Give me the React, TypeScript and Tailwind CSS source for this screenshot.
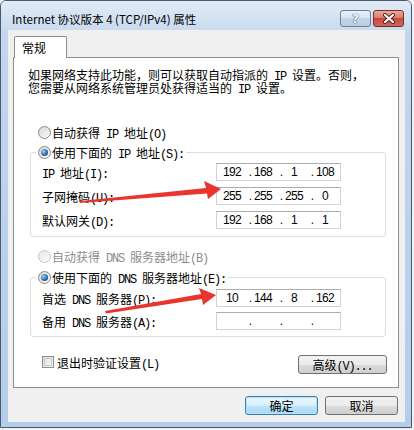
import React from "react";

function T({ s }: { s: string }) {
  const parts = s.split(/([\x20-\x7e]+)/).filter((p) => p.length > 0);
  return (
    <span className="flex items-baseline h-[13px] whitespace-nowrap">
      {parts.map((p, i) =>
        /^[\x20-\x7e]+$/.test(p) ? (
          <span key={i} className="font-['Liberation_Mono',monospace] tracking-[-1.2px] whitespace-pre leading-[13px]">
            {p}
          </span>
        ) : (
          <span key={i} className="leading-[13px]">{p}</span>
        )
      )}
    </span>
  );
}

function Radio({ checked, disabled }: { checked?: boolean; disabled?: boolean }) {
  return (
    <div
      className={
        "w-[13px] h-[13px] rounded-full border flex items-center justify-center shrink-0 " +
        (disabled
          ? "border-[#c4c4c4] bg-linear-to-br from-[#e8e8e8] to-[#fafafa]"
          : "border-[#8a8a8a] bg-linear-to-br from-[#d6d6d6] to-[#fbfbfb]")
      }
    >
      {checked && (
        <div className="w-[7px] h-[7px] rounded-full bg-[radial-gradient(circle_at_35%_35%,#9fd0f5,#2a6fb0_55%,#123e6b)]" />
      )}
    </div>
  );
}

function IPBox({ v }: { v: string[] }) {
  return (
    <div className="w-[125px] h-[18px] bg-white border border-[#cfd2d8] border-t-[#abadb3] flex items-center pl-[4px] font-['Liberation_Sans',sans-serif] text-[12px] leading-[14px] text-black">
      <span className="w-[22px] text-center tracking-[-0.6px]">{v[0]}</span>
      <span className="w-[9px] text-right">.</span>
      <span className="w-[22px] text-center tracking-[-0.6px]">{v[1]}</span>
      <span className="w-[9px] text-right">.</span>
      <span className="w-[22px] text-center tracking-[-0.6px]">{v[2]}</span>
      <span className="w-[9px] text-right">.</span>
      <span className="w-[22px] text-center tracking-[-0.6px]">{v[3]}</span>
    </div>
  );
}

function Row({ label, v }: { label: string; v: string[] }) {
  return (
    <div className="flex items-center h-[18px] pl-[11px]">
      <div className="w-[174px]">
        <T s={label} />
      </div>
      <IPBox v={v} />
    </div>
  );
}

const btn =
  "h-[19px] rounded-[3px] border border-[#707070] bg-[linear-gradient(#f2f2f2,#ebebeb_50%,#dddddd_50%,#cfcfcf)] flex items-center justify-center text-[12px] leading-[13px] text-black";

export default function App() {
  return (
    <div className="w-[414px] h-[430px] bg-[#eef1f5] relative overflow-hidden font-['Noto_Sans_CJK_SC',sans-serif] text-[12px] leading-[13px] text-black">
      <div className="w-[412px] h-[428px] border border-[#4a5a6e] rounded-t-[6px] bg-linear-to-b from-[#c4d8ee] to-[#b4cde9] flex flex-col overflow-hidden">
        {/* Title bar */}
        <div className="h-[29px] shrink-0 flex items-start bg-linear-to-b from-[#e1ebf6] to-[#c9dbef]">
          <div className="ml-[11px] mt-[10px] text-[11.5px] leading-[16px] whitespace-nowrap text-black">
            Internet 协议版本 4 (TCP/IPv4) 属性
          </div>
          <div className="ml-auto mt-[9px] mr-[7px] flex gap-[2px]">
            <div className="w-[31px] h-[17px] rounded-[3px] border border-[#6e7f96] bg-[linear-gradient(#eaf1f9,#d6e3f2_50%,#c3d5ea_50%,#b8cce4)] flex items-center justify-center">
              <span className="font-['DejaVu_Sans',sans-serif] font-bold text-[12px] leading-[12px] text-[#f6f9fc] [text-shadow:0_0_1px_#34465e,0_0_1px_#34465e]">
                ?
              </span>
            </div>
            <div className="w-[31px] h-[17px] rounded-[3px] border border-[#7b2c25] bg-[linear-gradient(#eaaa9c,#d77868_50%,#c7483b_50%,#d0685a)] flex items-center justify-center">
              <svg width="14" height="11" viewBox="0 0 14 11">
                <path d="M3 2 L11 9 M11 2 L3 9" stroke="#5a1a14" strokeWidth="4" strokeLinecap="round" />
                <path d="M3 2 L11 9 M11 2 L3 9" stroke="#ffffff" strokeWidth="2.2" strokeLinecap="round" />
              </svg>
            </div>
          </div>
        </div>

        {/* Client */}
        <div className="ml-[7px] w-[397px] h-[392px] bg-[#f0f0f0] flex flex-col pt-[6px]">
          <div className="ml-[6px] w-[53px] h-[22px] -mb-[1px] relative z-10 bg-white border border-b-0 border-[#898c95] rounded-t-[2px] pl-[7px] pt-[4px] leading-[13px]">
            常规
          </div>
          <div className="ml-[5px] w-[386px] h-[331px] bg-white border border-[#898c95] flex flex-col">
            <div className="mt-[10px] pl-[14px] flex flex-col">
              <T s="如果网络支持此功能，则可以获取自动指派的 IP 设置。否则，" />
              <T s="您需要从网络系统管理员处获得适当的 IP 设置。" />
            </div>

            <div className="mt-[32px] ml-[24px] flex items-center gap-[1px] h-[13px]">
              <Radio />
              <T s="自动获得 IP 地址(O)" />
            </div>

            <div className="mt-[13px] ml-[16px] w-[356px] border border-[#d5dfe5] rounded-[3px] flex flex-col pb-[7px]">
              <div className="-mt-[7px] ml-[5px] px-[2px] bg-white w-fit flex items-center gap-[1px] h-[13px]">
                <Radio checked />
                <T s="使用下面的 IP 地址(S):" />
              </div>
              <div className="mt-[4px] flex flex-col gap-[6px]">
                <Row label="IP 地址(I):" v={["192", "168", "1", "108"]} />
                <Row label="子网掩码(U):" v={["255", "255", "255", "0"]} />
                <Row label="默认网关(D):" v={["192", "168", "1", "1"]} />
              </div>
            </div>

            <div className="mt-[13px] ml-[24px] flex items-center gap-[1px] h-[13px] text-[#8d8d8d]">
              <Radio disabled />
              <T s="自动获得 DNS 服务器地址(B)" />
            </div>

            <div className="mt-[14px] ml-[16px] w-[356px] border border-[#d5dfe5] rounded-[3px] flex flex-col pb-[6px]">
              <div className="-mt-[7px] ml-[5px] px-[2px] bg-white w-fit flex items-center gap-[1px] h-[13px]">
                <Radio checked />
                <T s="使用下面的 DNS 服务器地址(E):" />
              </div>
              <div className="mt-[5px] flex flex-col gap-[5px]">
                <Row label="首选 DNS 服务器(P):" v={["10", "144", "8", "162"]} />
                <Row label="备用 DNS 服务器(A):" v={["", "", "", ""]} />
              </div>
            </div>

            <div className="mt-[18px] flex items-start">
              <div className="ml-[28px] mt-[1px] flex items-center gap-[3px] h-[12px]">
                <div className="w-[12px] h-[12px] border border-[#8f8f8f] bg-linear-to-br from-[#dcdcdc] to-[#f7f7f7] flex items-center justify-center">
                  <div className="w-[8px] h-[8px] border border-[#c9c9c9] bg-linear-to-br from-[#e6e6e6] to-[#f4f4f4]" />
                </div>
                <T s="退出时验证设置(L)" />
              </div>
              <div className={btn + " ml-auto mr-[11px] w-[89px] h-[18px]"}>
                <T s="高级(V)..." />
              </div>
            </div>
          </div>

          <div className="mt-[8px] mr-[7px] flex justify-end gap-[7px]">
            <div className="w-[73px] h-[19px] rounded-[3px] border border-[#3c7fb1] bg-[linear-gradient(#eaf6fd,#d9f0fc_50%,#bee6fd_50%,#a7d9f5)] shadow-[inset_0_0_0_1px_#b9e0f7] flex items-center justify-center text-[12px] leading-[13px]">
              确定
            </div>
            <div className={btn + " w-[73px]"}>取消</div>
          </div>
        </div>
      </div>

      {/* red arrows */}
      <svg className="absolute left-0 top-0 pointer-events-none" width="414" height="430" viewBox="0 0 414 430">
        <polygon points="80,201 206,188 204,181 221,189 208,199 207,193.5 80,203" fill="#e8362f" />
        <polygon points="105,311 201,294 199,288 216,295 203,305 202,299 106,313.5" fill="#e8362f" />
      </svg>
    </div>
  );
}
